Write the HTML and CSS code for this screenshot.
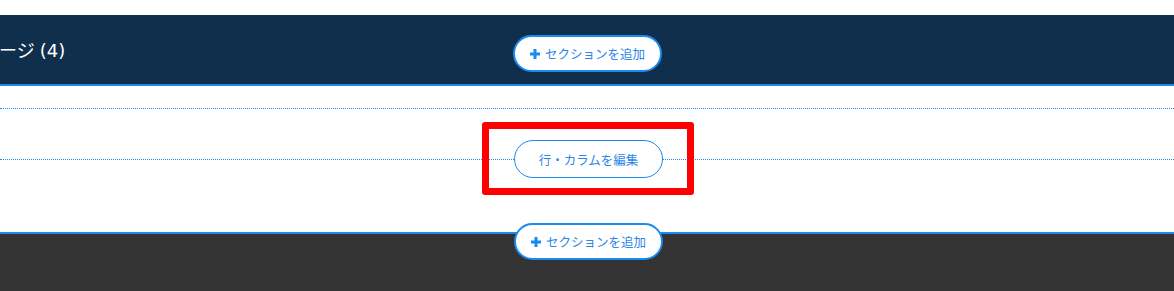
FILE: index.html
```html
<!DOCTYPE html>
<html lang="ja">
<head>
<meta charset="utf-8">
<title>Editor</title>
<link rel="stylesheet" href="styles.css">
</head>
<body>
<div class="top-gap"></div>
<header class="page-head">
  <div class="page-title">ページ <span class="count">(4)</span></div>
  <button class="add-section">
    <svg class="plus" viewBox="0 0 10 10" width="10" height="10"><rect x="3.5" y="0" width="3" height="10"/><rect x="0" y="3.5" width="10" height="3"/></svg>
    <span>セクションを追加</span>
  </button>
  <div></div>
</header>
<section class="section">
  <div class="section-inner">
    <div class="row">
      <div class="highlight">
        <button class="edit-row">行・カラムを編集</button>
      </div>
    </div>
  </div>
</section>
<footer class="page-foot">
  <button class="add-section">
    <svg class="plus" viewBox="0 0 10 10" width="10" height="10"><rect x="3.5" y="0" width="3" height="10"/><rect x="0" y="3.5" width="10" height="3"/></svg>
    <span>セクションを追加</span>
  </button>
</footer>
</body>
</html>
```

FILE: styles.css
```css
html, body {
  margin: 0;
  padding: 0;
  background: #ffffff;
  overflow: hidden;
}
body {
  font-family: "Noto Sans CJK JP", "Noto Sans", sans-serif;
  width: 1174px;
  height: 291px;
}
.top-gap {
  height: 15px;
}
.page-head {
  height: 69px;
  background: #102f4c;
  border-bottom: 2px solid #1a8cf0;
  display: grid;
  grid-template-columns: 1fr auto 1fr;
  align-items: center;
}
.page-title {
  color: #ffffff;
  font-family: "Noto Sans CJK JP", sans-serif;
  font-size: 18px;
  margin-left: -19px;
  white-space: nowrap;
  margin-top: -2px;
}
.count {
  font-family: "DejaVu Sans", "Noto Sans", sans-serif;
  font-size: 18px;
  margin-left: 1px;
}
.add-section {
  width: 149px;
  height: 37px;
  border: 2px solid #1a8cf0;
  border-radius: 19px;
  background: #ffffff;
  color: #2a86e8;
  font-family: "Noto Sans CJK JP", sans-serif;
  font-size: 12.5px;
  display: flex;
  align-items: center;
  justify-content: center;
  gap: 5px;
  padding: 0;
  box-sizing: border-box;
  cursor: pointer;
}
.page-head .add-section {
  align-self: start;
  margin-top: 20px;
  margin-left: 1px;
}
.plus {
  fill: #1a8cf0;
  flex: none;
}
.section {
  height: 146px;
  padding-top: 22px;
  box-sizing: border-box;
}
.section-inner {
  border-top: 1px dotted #1a8cf0;
  padding-top: 13px;
}
.row {
  position: relative;
  display: flex;
  justify-content: center;
}
.row::before {
  content: "";
  position: absolute;
  left: 0;
  right: 0;
  top: 50%;
  border-top: 1px dotted #1a8cf0;
}
.highlight {
  position: relative;
  border: 7px solid #ff0000;
  border-radius: 3px;
  padding: 11px 24px 10px 25px;
  margin-left: 2px;
}
.edit-row {
  display: block;
  width: 149px;
  height: 38px;
  border: 1px solid #1a8cf0;
  border-radius: 19px;
  background: #ffffff;
  color: #2a86e8;
  font-family: "Noto Sans CJK JP", sans-serif;
  font-size: 12.5px;
  padding: 0;
  box-sizing: border-box;
  cursor: pointer;
}
.page-foot {
  height: 58px;
  background: #333333;
  border-top: 2px solid #1a8cf0;
  display: flex;
  justify-content: center;
}
.page-foot .add-section {
  margin-top: -11px;
  margin-left: 3px;
}
```
